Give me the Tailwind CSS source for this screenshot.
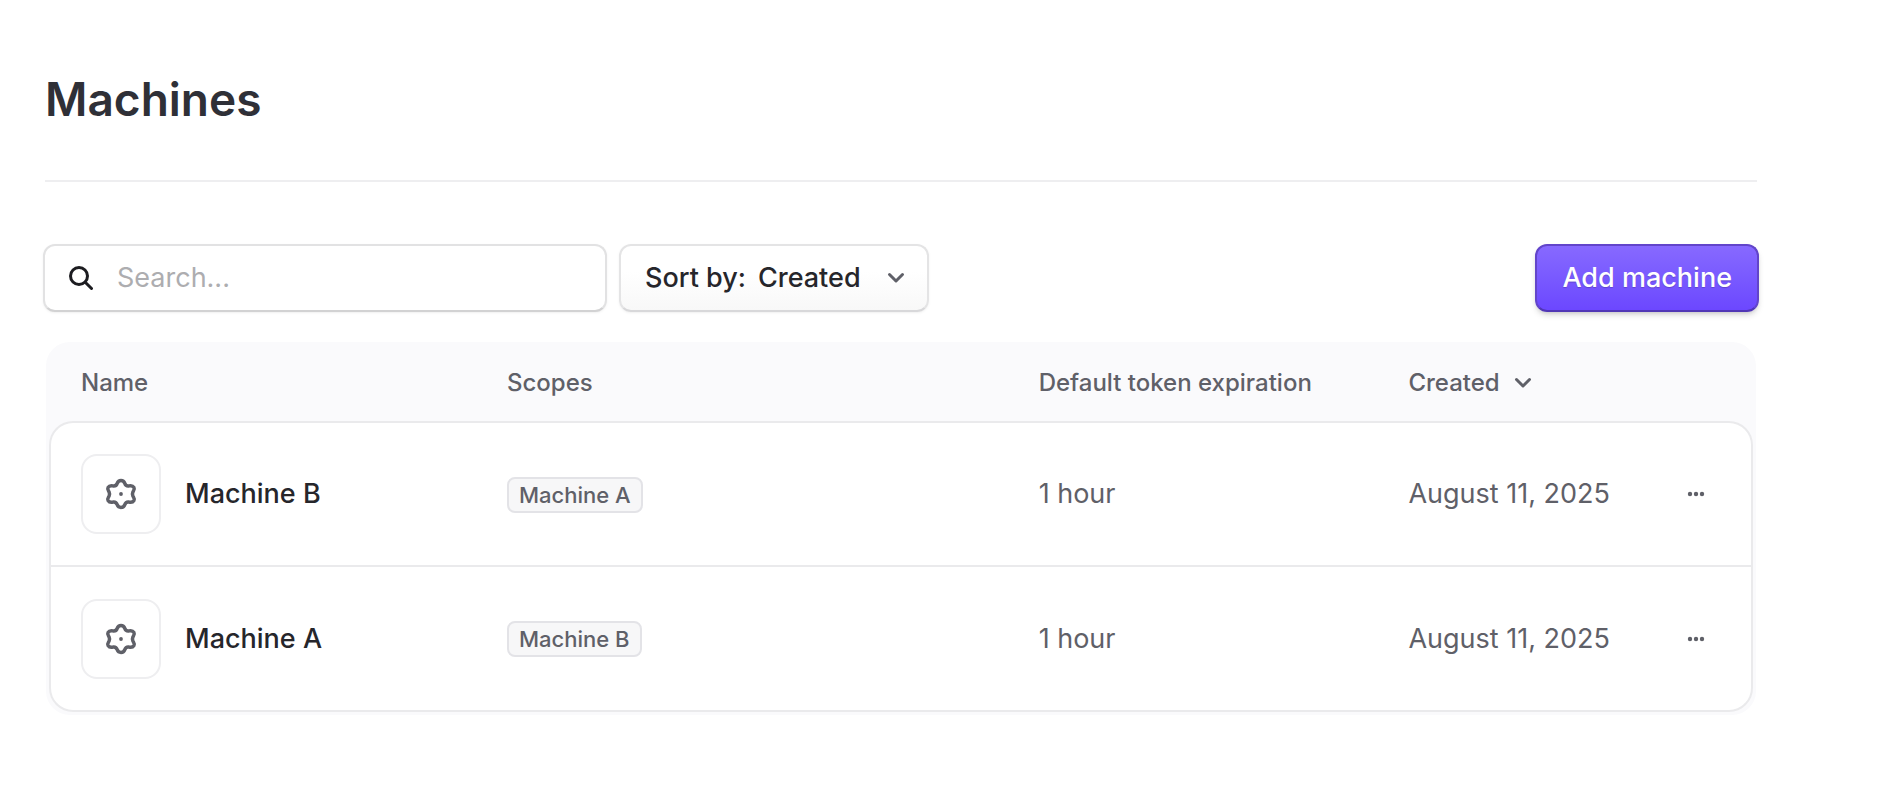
<!DOCTYPE html>
<html lang="en">
<head>
<meta charset="UTF-8" />
<meta name="viewport" content="width=device-width, initial-scale=1.0" />
<title>Machines</title>
<script src="https://cdn.jsdelivr.net/npm/@tailwindcss/browser@4"></script>
</head>
<body class="bg-white font-['Inter','Liberation_Sans',sans-serif] text-[27px] leading-9 text-[#26262b]">

<!-- shared icons -->
<svg class="hidden" aria-hidden="true">
  <symbol id="gear" viewBox="0 0 32 32">
    <path d="M16 2.600C18 2.600 19.200 3.700 19.800 5.300C20.500 7.300 22 8.200 24 7.900C26 7.500 27.800 7.600 28.900 9.400C30 11.300 28.600 12.600 27.900 14C27.300 15.300 27.300 16.700 27.900 18C28.600 19.400 30 20.700 28.900 22.600C27.800 24.400 26 24.500 24 24.100C22 23.800 20.500 24.700 19.800 26.700C19.200 28.300 18 29.400 16 29.400C14 29.400 12.800 28.300 12.200 26.700C11.500 24.700 10 23.800 8 24.100C6 24.500 4.200 24.400 3.100 22.600C2 20.700 3.400 19.400 4.100 18C4.700 16.700 4.700 15.300 4.100 14C3.400 12.600 2 11.300 3.100 9.400C4.200 7.600 6 7.500 8 7.900C10 8.200 11.500 7.300 12.200 5.300C12.800 3.700 14 2.600 16 2.600Z" fill="none" stroke="currentColor" stroke-width="3.500" stroke-linejoin="round"/>
    <circle cx="16" cy="16" r="1.900" fill="currentColor"/>
  </symbol>
  <symbol id="chevron" viewBox="0 0 18 12">
    <path d="M2.500 2.500 9 9l6.500-6.500" fill="none" stroke="currentColor" stroke-width="3" stroke-linecap="round" stroke-linejoin="round"/>
  </symbol>
  <symbol id="dots" viewBox="0 0 18 6">
    <circle cx="3" cy="3" r="2.200" fill="currentColor"/><circle cx="9" cy="3" r="2.200" fill="currentColor"/><circle cx="15" cy="3" r="2.200" fill="currentColor"/>
  </symbol>
</svg>

<main class="pt-[67px] pl-[43px] pr-[123px]">
  <header class="mx-0.5 border-b-2 border-[#eeeef0] pb-[49px]">
    <h1 class="text-[46px] leading-16 font-semibold text-[#2f3037]">Machines</h1>
  </header>

  <div class="mt-[62px] flex items-center gap-3">
    <label class="flex h-[68px] w-[564px] items-center gap-6 rounded-xl border-2 border-[#e2e2e3] border-b-[#d2d2d3] bg-white pl-6 pr-4 shadow-sm shadow-black/5">
      <svg class="size-6 shrink-0 text-[#1c1c20]" viewBox="0 0 24 24" fill="none" stroke="currentColor" stroke-width="3" stroke-linecap="round"><circle cx="10" cy="10" r="8.500"/><path d="m16.500 16.500 6 6"/></svg>
      <input type="text" aria-label="Search" placeholder="Search..." class="min-w-0 flex-1 bg-transparent outline-none placeholder:text-[#adadb0]" />
    </label>

    <div class="relative flex h-[68px] items-center gap-3 rounded-xl border-2 border-[#e4e4e5] border-b-[#d8d8da] bg-linear-to-b from-white from-40% to-[#f8f8f8] pl-6 font-medium shadow-sm shadow-black/5">
      <label for="sortSel">Sort by:</label>
      <select id="sortSel" class="w-[169px] appearance-none bg-transparent outline-none">
        <option>Created</option>
        <option>Name</option>
      </select>
      <svg class="pointer-events-none absolute right-[22px] h-3 w-[18px] text-[#5f6068]"><use href="#chevron"/></svg>
    </div>

    <button type="button" class="ml-auto h-[68px] rounded-xl border-2 border-[#6245ca] border-b-[#5036b5] bg-linear-to-b from-[#8769ff] to-[#6c47ff] px-[25px] font-medium text-white shadow-md shadow-black/15 text-shadow-xs">Add machine</button>
  </div>

  <div class="mx-[3px] mt-[30px] rounded-3xl bg-[#fafafc] px-[3px] pb-[3px]">
    <table class="w-full table-fixed border-separate border-spacing-0 text-left">
      <thead class="text-2xl text-[#5f6068]">
        <tr class="h-[79px] *:pt-0.5">
          <th class="w-[25%] pl-8 font-medium">Name</th>
          <th class="w-[31.200%] pl-8 font-medium">Scopes</th>
          <th class="w-[21.700%] pl-8 font-medium">Default token expiration</th>
          <th class="w-[15.500%] pl-8 font-medium"><button type="button" class="flex items-center gap-3.5">Created <svg class="h-3 w-[18px]"><use href="#chevron"/></svg></button></th>
          <th aria-label="Actions"></th>
        </tr>
      </thead>
      <tbody class="text-[#5f6068]">
        <tr class="h-[146px] *:border-[#eaeaec] *:border-y-2 *:bg-white">
          <td class="rounded-tl-3xl border-l-2 pl-[30px]">
            <div class="flex items-center gap-6">
              <span class="flex size-20 items-center justify-center rounded-2xl border-2 border-[#eeeef0]"><svg class="size-8"><use href="#gear"/></svg></span>
              <span class="font-medium text-[#26262b]">Machine B</span>
            </div>
          </td>
          <td class="pl-8"><span class="inline-block h-9 rounded-lg border-2 border-[#e3e3e7] bg-[#f7f7f8] px-2.5 text-[22px] leading-8 font-medium">Machine A</span></td>
          <td class="pl-8">1 hour</td>
          <td class="pl-8 whitespace-nowrap">August 11, 2025</td>
          <td class="rounded-tr-3xl border-r-2"><button type="button" aria-label="Machine B actions" class="mx-auto block p-3"><svg class="h-1.5 w-[18px]"><use href="#dots"/></svg></button></td>
        </tr>
        <tr class="h-[145px] *:border-[#eaeaec] *:border-b-2 *:bg-white">
          <td class="rounded-bl-3xl border-l-2 pl-[30px]">
            <div class="flex items-center gap-6">
              <span class="flex size-20 items-center justify-center rounded-2xl border-2 border-[#eeeef0]"><svg class="size-8"><use href="#gear"/></svg></span>
              <span class="font-medium text-[#26262b]">Machine A</span>
            </div>
          </td>
          <td class="pl-8"><span class="inline-block h-9 rounded-lg border-2 border-[#e3e3e7] bg-[#f7f7f8] px-2.5 text-[22px] leading-8 font-medium">Machine B</span></td>
          <td class="pl-8">1 hour</td>
          <td class="pl-8 whitespace-nowrap">August 11, 2025</td>
          <td class="rounded-br-3xl border-r-2"><button type="button" aria-label="Machine A actions" class="mx-auto block p-3"><svg class="h-1.5 w-[18px]"><use href="#dots"/></svg></button></td>
        </tr>
      </tbody>
    </table>
  </div>
</main>

</body>
</html>
